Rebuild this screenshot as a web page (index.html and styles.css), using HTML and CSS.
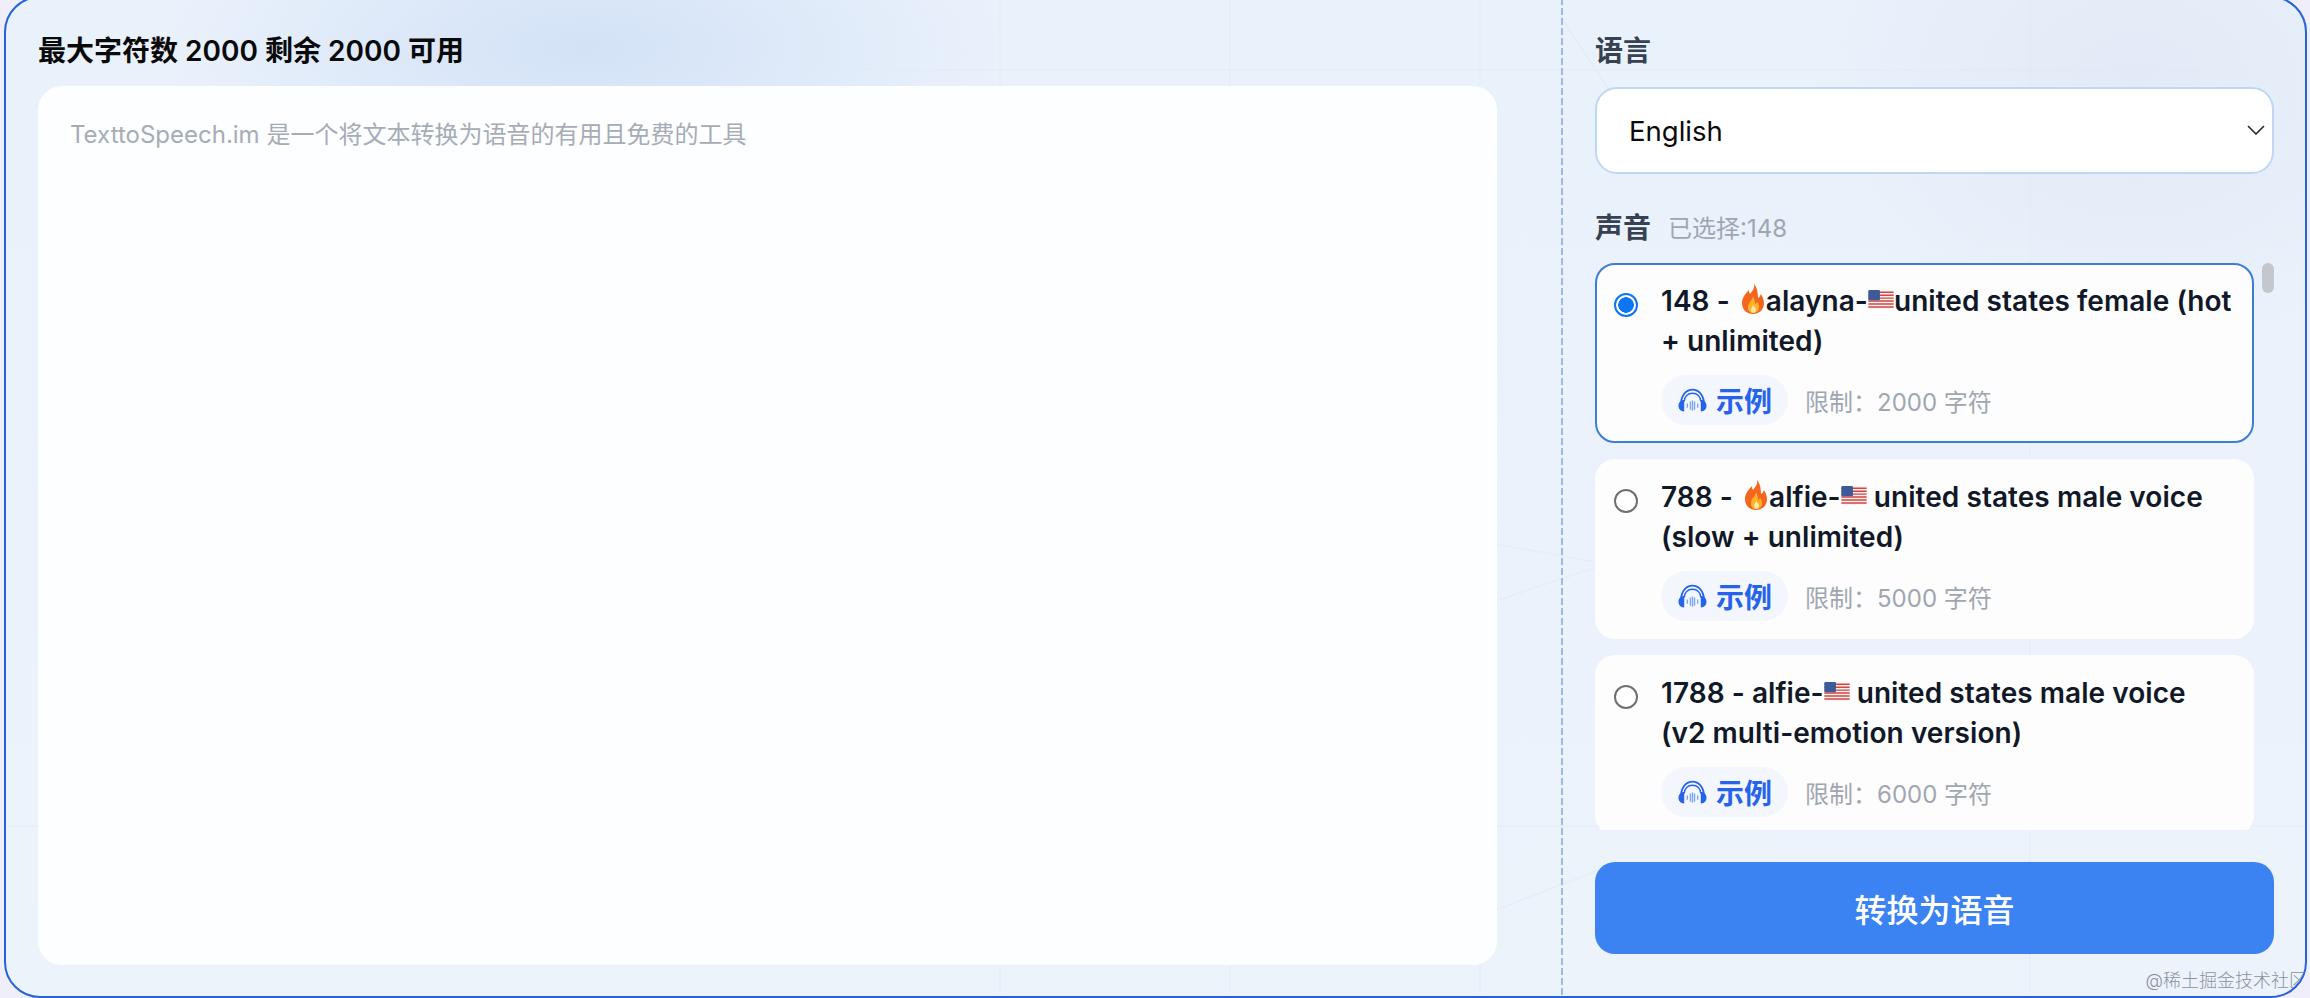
FILE: index.html
```html
<!DOCTYPE html>
<html lang="zh-CN">
<head>
    <meta charset="UTF-8">
    <meta name="viewport" content="width=device-width, initial-scale=1.0">
    <title>TexttoSpeech.im</title>
    <link rel="stylesheet" href="styles.css">
</head>
<body>
    <svg width="0" height="0" class="defs">
        <symbol id="flame" viewBox="0 0 24 32">
            <path d="M13 1c1 5-2 7-4 10-1-1-1-3-1-4C4 11 1 15 1 20c0 7 5 11 11 11s11-4 11-11c0-4-2-7-3-9-1 2-1 3-3 4 0-5-1-11-4-14z" fill="#f4661e"/>
            <path d="M12 13c0 4-5 6-5 11 0 4 2 6 5 6s6-2 6-6c0-2-1-4-2-5-1 1-1 2-2 2 0-3-1-6-2-8z" fill="#fbb429"/>
            <path d="M12 22c0 2-2 3-2 5 0 2 1 3 2 3s3-1 3-3c0-2-2-3-3-5z" fill="#fde9a8"/>
        </symbol>
        <symbol id="flag" viewBox="0 0 24 18">
            <rect width="24" height="18" rx="2" fill="#f3f3f5"/>
            <path d="M0 1.400h24v1.400H0zM0 4.200h24v1.400H0zM0 7h24v1.400H0zM0 9.800h24v1.400H0zM0 12.600h24v1.400H0zM0 15.400h24v1.400H0z" fill="#d8453f"/>
            <rect width="11" height="9.800" rx="1" fill="#3d5a99"/>
        </symbol>
        <symbol id="headphones" viewBox="0 0 28 24">
            <path d="M3 15C3 7 8 1.500 14 1.500S25 7 25 15" fill="none" stroke="#2563eb" stroke-width="1.800"/>
            <path d="M6 13C6 8 9.500 5 14 5s8 3 8 8" fill="none" stroke="#2563eb" stroke-width="1.300"/>
            <path d="M.5 17c0-3 2-5.500 5.500-5.500v11C2.500 22.500.5 20 .5 17zM27.500 17c0-3-2-5.500-5.500-5.500v11c3.500 0 5.500-2.500 5.500-5.500z" fill="#2563eb"/>
            <path d="M9 15v4M12 13v8M14 12v10M16 13v8M19 15v4" stroke="#7ea6f0" stroke-width="1.300"/>
        </symbol>
    </svg>

    <div class="frame">
        <svg class="lines" viewBox="0 0 2310 998">
            <path d="M800 74H2200M0 830H2310M1000 0V998M1230 0V998M1480 0V998M2030 0V998M1480 545l120 22M1480 610l120-40M1480 920l130-50M1560 20l60 90M2060 300l-40 140"/>
        </svg>

        <div class="left">
            <div class="title">最大字符数 2000 剩余 2000 可用</div>
            <textarea class="text-box" placeholder="TexttoSpeech.im 是一个将文本转换为语音的有用且免费的工具"></textarea>
        </div>

        <div class="divider"></div>

        <div class="right">
            <div class="label">语言</div>
            <div class="select-wrap">
                <select class="lang-select">
                    <option>English</option>
                </select>
                <svg class="chevron" viewBox="0 0 18 10"><path d="M1 1l8 8 8-8" fill="none" stroke="#1f2937" stroke-width="1.600"/></svg>
            </div>

            <div class="voice-head">
                <span class="label">声音</span>
                <span class="selected">已选择:148</span>
            </div>

            <div class="voice-wrap">
                <div class="voice-list">
                    <label class="voice active">
                        <input type="radio" name="voice" checked>
                        <div class="voice-body">
                            <div class="voice-name">148 - <svg class="fire"><use href="#flame"/></svg>alayna-<svg class="us"><use href="#flag"/></svg>united states female (hot + unlimited)</div>
                            <div class="voice-meta">
                                <span class="sample"><svg class="phones"><use href="#headphones"/></svg>示例</span>
                                <span class="limit">限制：2000 字符</span>
                            </div>
                        </div>
                    </label>
                    <label class="voice">
                        <input type="radio" name="voice">
                        <div class="voice-body">
                            <div class="voice-name">788 - <svg class="fire"><use href="#flame"/></svg>alfie-<svg class="us"><use href="#flag"/></svg> united states male voice (slow + unlimited)</div>
                            <div class="voice-meta">
                                <span class="sample"><svg class="phones"><use href="#headphones"/></svg>示例</span>
                                <span class="limit">限制：5000 字符</span>
                            </div>
                        </div>
                    </label>
                    <label class="voice">
                        <input type="radio" name="voice">
                        <div class="voice-body">
                            <div class="voice-name">1788 - alfie-<svg class="us"><use href="#flag"/></svg> united states male voice (v2 multi-emotion version)</div>
                            <div class="voice-meta">
                                <span class="sample"><svg class="phones"><use href="#headphones"/></svg>示例</span>
                                <span class="limit">限制：6000 字符</span>
                            </div>
                        </div>
                    </label>
                </div>
                <div class="thumb"></div>
            </div>

            <button class="convert">转换为语音</button>
        </div>

        <div class="watermark">@稀土掘金技术社区</div>
    </div>
</body>
</html>
```

FILE: styles.css
```css
html, body {
    margin: 0;
    height: 998px;
    overflow: hidden;
    background: #f1eefb;
}
body, textarea, select, button {
    font-family: Inter, "Noto Sans CJK SC", sans-serif;
}
.defs {
    display: block;
}
.frame {
    position: relative;
    box-sizing: border-box;
    display: flex;
    height: 1002px;
    margin: -4px 3px 0 4px;
    border: 2px solid #2563d9;
    border-radius: 36px;
    overflow: hidden;
    background:
        radial-gradient(ellipse 420px 170px at 580px 50px, #d3e2f7 0%, rgba(211, 226, 247, 0) 100%),
        radial-gradient(ellipse 320px 260px at 2130px 90px, #e1eaf6 0%, rgba(225, 234, 246, 0) 100%),
        linear-gradient(180deg, #e9f1fb 0%, #edf3fb 100%);
}
.lines {
    position: absolute;
    left: -6px;
    top: -2px;
    width: 2310px;
    height: 998px;
}
.lines path {
    fill: none;
    stroke: #dfe7f1;
    stroke-width: 1.5;
    opacity: 0.4;
}

/* left side */
.left {
    position: relative;
    display: flex;
    flex-direction: column;
    box-sizing: border-box;
    width: 1555px;
    padding: 35px 64px 31px 32px;
}
.title {
    height: 36px;
    margin-bottom: 17px;
    font-size: 28px;
    line-height: 36px;
    font-weight: 600;
    color: #0a0a0a;
}
.text-box {
    flex: 1;
    box-sizing: border-box;
    padding: 32px;
    border: none;
    border-radius: 24px;
    outline: none;
    resize: none;
    background: #fdfeff;
    font-size: 24px;
    line-height: 34px;
}
.text-box::placeholder {
    color: #a6acb6;
}
.divider {
    position: relative;
    flex: none;
    width: 2px;
    background: repeating-linear-gradient(180deg, #9db9e6 0, #9db9e6 7px, transparent 7px, transparent 10px);
}

/* right side */
.right {
    position: relative;
    display: flex;
    flex-direction: column;
    box-sizing: border-box;
    flex: 1;
    padding: 35px 31px 0 32px;
}
.label {
    height: 36px;
    font-size: 28px;
    line-height: 36px;
    font-weight: 600;
    color: #374151;
}
.select-wrap {
    position: relative;
    margin-top: 18px;
}
.lang-select {
    display: block;
    box-sizing: border-box;
    width: 100%;
    height: 87px;
    padding: 0 32px;
    border: 2px solid #bfd7f5;
    border-radius: 22px;
    outline: none;
    appearance: none;
    background: #fff;
    font-size: 27.5px;
    color: #0a0a0a;
}
.chevron {
    position: absolute;
    right: 9px;
    top: 38px;
    width: 18px;
    height: 10px;
}
.voice-head {
    display: flex;
    align-items: center;
    gap: 17px;
    height: 36px;
    margin-top: 36px;
}
.selected {
    padding-bottom: 3px;
    font-size: 24px;
    color: #a0a6b1;
}
.voice-wrap {
    position: relative;
    height: 567px;
    margin-top: 17px;
    overflow: hidden;
}
.voice-list {
    display: flex;
    flex-direction: column;
    gap: 16px;
    width: 659px;
}
.voice {
    display: flex;
    flex: none;
    box-sizing: border-box;
    height: 180px;
    padding: 16px 16px 0 17px;
    border: 2px solid transparent;
    border-radius: 20px;
    background: #fdfdfe;
}
.voice.active {
    border-color: #3b7dd8;
}
.voice input {
    flex: none;
    box-sizing: border-box;
    width: 24px;
    height: 24px;
    margin: 12px 23px 0 0;
    border: 2px solid #6f6f6f;
    border-radius: 50%;
    appearance: none;
    background: #fff;
}
.voice input:checked {
    border-color: #0b76f5;
    background: radial-gradient(circle, #0b76f5 0, #0b76f5 7.5px, #fff 8px);
}
.voice-name {
    font-size: 28px;
    line-height: 40px;
    font-weight: 600;
    letter-spacing: 0.05px;
    color: #111827;
}
.fire {
    width: 26px;
    height: 32px;
    margin-left: 3px;
    vertical-align: -4px;
}
.us {
    width: 26px;
    height: 19px;
    vertical-align: 2px;
}
.voice-meta {
    display: flex;
    align-items: center;
    gap: 17px;
    margin-top: 14px;
}
.sample {
    display: flex;
    align-items: center;
    gap: 9px;
    box-sizing: border-box;
    height: 50px;
    padding: 0 16px 0 17px;
    border-radius: 25px;
    background: #f4f6fe;
    font-size: 28px;
    font-weight: 600;
    color: #2563eb;
}
.phones {
    width: 29px;
    height: 25px;
}
.limit {
    font-size: 24px;
    color: #a0a6b1;
}
.thumb {
    position: absolute;
    right: 0;
    top: 0;
    width: 12px;
    height: 30px;
    border-radius: 6px;
    background: #c4c7cc;
}
.convert {
    height: 92px;
    margin-top: 32px;
    border: none;
    border-radius: 20px;
    background: #3b82f3;
    font-size: 32px;
    font-weight: 500;
    color: #fff;
}
.watermark {
    position: absolute;
    right: -2px;
    bottom: 1px;
    font-size: 18px;
    line-height: 28px;
    font-weight: 300;
    color: #8b929b;
}
```
